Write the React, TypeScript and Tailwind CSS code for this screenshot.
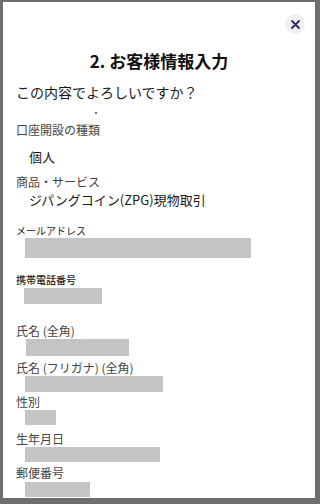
import React from "react";

const font = { fontFamily: '"Noto Sans CJK JP", "Noto Sans", sans-serif' };

function Label({ children, className }: { children: React.ReactNode; className: string }) {
  return <div className={className}>{children}</div>;
}

export default function App() {
  return (
    <div
      className="w-[320px] h-[504px] bg-[#6e6e6e] pt-[2px] pl-[3px] pr-[5px] pb-[6px] overflow-hidden"
      style={font}
    >
      <div className="w-full h-full bg-white overflow-hidden flex flex-col">
        <div className="flex justify-end pr-[10px] mt-[12px]">
          <button className="w-[20px] h-[20px] rounded-full bg-[#f0eff6] flex items-center justify-center">
            <svg width="9" height="9" viewBox="0 0 9 9">
              <path d="M1 1 L8 8 M8 1 L1 8" stroke="#2c2a5c" strokeWidth="1.8" strokeLinecap="round" />
            </svg>
          </button>
        </div>
        <div className="mt-[15px] text-center text-[17px] leading-[24px] font-bold text-[#111]">
          2. お客様情報入力
        </div>
        <div className="pl-[13px] flex flex-col">
          <div className="mt-[9px] text-[14px] leading-[20px] text-[#1a1a1a]">この内容でよろしいですか？</div>
          <div className="mt-[10px] ml-[79px] w-[2px] h-[2px] rounded-full bg-[#444]" />
          <Label className="mt-[8px] text-[12px] leading-[16px] text-[#444]">口座開設の種類</Label>
          <div className="mt-[10px] pl-[13px] text-[13px] leading-[18px] text-[#1a1a1a]">個人</div>
          <Label className="mt-[8px] text-[12px] leading-[16px] text-[#444]">商品・サービス</Label>
          <div className="mt-[1px] pl-[13px] text-[13px] leading-[18px] text-[#1a1a1a]">ジパングコイン(ZPG)現物取引</div>
          <Label className="mt-[15px] text-[10px] leading-[14px] text-[#1a1a1a]">メールアドレス</Label>
          <div className="ml-[9px] w-[226px] h-[20px] bg-[#c4c4c4]" />
          <Label className="mt-[15px] text-[10px] leading-[14px] font-medium text-[#1a1a1a]">携帯電話番号</Label>
          <div className="mt-[1px] ml-[8px] w-[78px] h-[16px] bg-[#c4c4c4]" />
          <Label className="mt-[19px] text-[12px] leading-[16px] text-[#444]">氏名 (全角)</Label>
          <div className="ml-[10px] w-[103px] h-[17px] bg-[#c4c4c4]" />
          <Label className="mt-[4px] text-[12px] leading-[16px] text-[#444]">氏名 (フリガナ) (全角)</Label>
          <div className="ml-[9px] w-[138px] h-[16px] bg-[#c4c4c4]" />
          <Label className="mt-[2px] text-[12px] leading-[16px] text-[#444]">性別</Label>
          <div className="ml-[9px] w-[31px] h-[15px] bg-[#c4c4c4]" />
          <Label className="mt-[6px] text-[12px] leading-[16px] text-[#444]">生年月日</Label>
          <div className="ml-[9px] w-[135px] h-[15px] bg-[#c4c4c4]" />
          <Label className="mt-[3px] text-[12px] leading-[16px] text-[#444]">郵便番号</Label>
          <div className="mt-[1px] ml-[9px] w-[65px] h-[15px] bg-[#c4c4c4]" />
        </div>
      </div>
    </div>
  );
}
